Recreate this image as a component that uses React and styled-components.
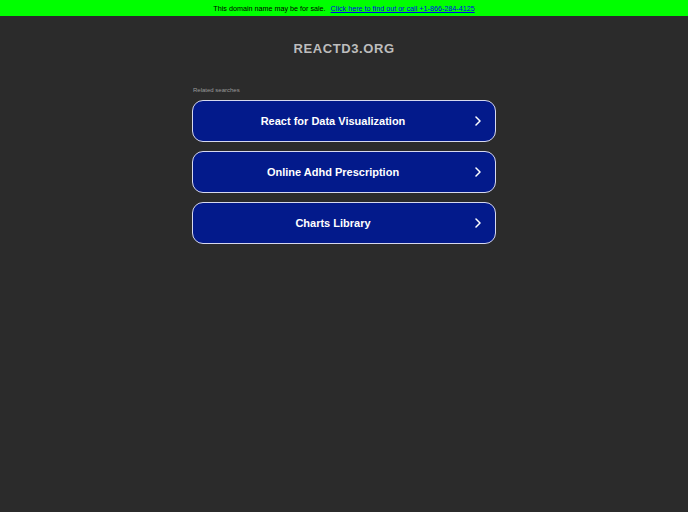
import React from 'react';
import styled, { createGlobalStyle } from 'styled-components';

const GlobalStyle = createGlobalStyle`
  html, body {
    margin: 0;
    padding: 0;
    background: #2b2b2b;
    font-family: "Liberation Sans", Arial, sans-serif;
  }
`;

const Page = styled.div`
  min-height: 512px;
  background: #2b2b2b;
`;

const SaleBar = styled.div`
  height: 16px;
  background: #00ff00;
  display: flex;
  align-items: center;
  justify-content: center;
  font-size: 7.2px;
  color: #000;
  gap: 5px;
`;

const SaleLink = styled.a`
  color: #0000ee;
  text-decoration: underline;
`;

const Domain = styled.h1`
  margin: 25px 0 0;
  text-align: center;
  font-size: 13px;
  font-weight: bold;
  letter-spacing: 0.6px;
  color: #bdbdbd;
  line-height: 16px;
`;

const Content = styled.div`
  width: 304px;
  margin: 30px auto 0;
`;

const Caption = styled.div`
  font-size: 6px;
  color: #9a9a9a;
  margin-left: 1px;
  margin-bottom: 7px;
`;

const List = styled.div`
  display: flex;
  flex-direction: column;
  gap: 9px;
`;

const SearchButton = styled.a`
  position: relative;
  display: flex;
  align-items: center;
  justify-content: center;
  height: 42px;
  box-sizing: border-box;
  padding-right: 22px;
  border: 1px solid #d6d8ee;
  border-radius: 11px;
  background: #031a8b;
  color: #fff;
  font-size: 11px;
  font-weight: bold;
  text-decoration: none;
`;

const Chevron = styled.svg`
  position: absolute;
  right: 14px;
  top: 50%;
  margin-top: -5px;
`;

const searches = ['React for Data Visualization', 'Online Adhd Prescription', 'Charts Library'];

const App = () => (
  <Page>
    <GlobalStyle />
    <SaleBar>
      <span>This domain name may be for sale.</span>
      <SaleLink href="#">Click here to find out or call +1-866-284-4125</SaleLink>
    </SaleBar>
    <Domain>REACTD3.ORG</Domain>
    <Content>
      <Caption>Related searches</Caption>
      <List>
        {searches.map((s) => (
          <SearchButton key={s} href="#">
            {s}
            <Chevron width="6" height="10" viewBox="0 0 6 10">
              <path d="M1 1l4 4-4 4" fill="none" stroke="#fff" strokeWidth="1.5" strokeLinecap="round" strokeLinejoin="round" />
            </Chevron>
          </SearchButton>
        ))}
      </List>
    </Content>
  </Page>
);

export default App;
